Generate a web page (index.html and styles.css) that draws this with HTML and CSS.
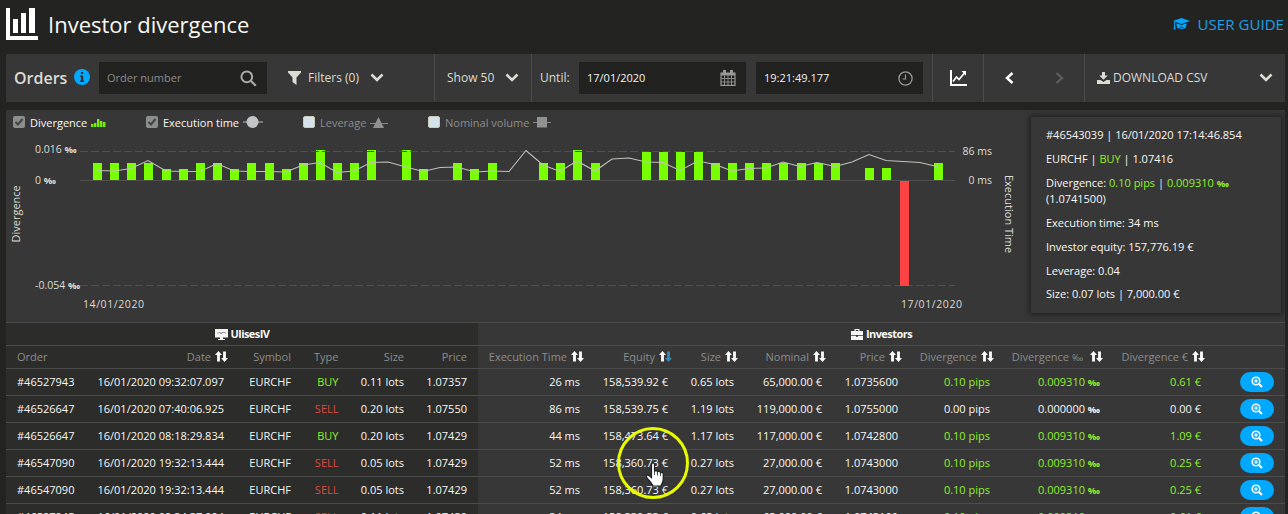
FILE: index.html
```
<!DOCTYPE html>
<html lang="en">
<head>
<meta charset="utf-8">
<title>Investor divergence</title>
<link rel="stylesheet" href="styles.css">
</head>
<body>
<svg class="defs" aria-hidden="true">
  <symbol id="chevron" viewBox="0 0 14 9"><path d="M1.500 1.500 7 7l5.500-5.500" fill="none" stroke="currentColor" stroke-width="2.600"/></symbol>
  <symbol id="sort" viewBox="0 0 13 11"><path d="M3.500 0 7 4H4.900v6.500H2.100V4H0z" fill="currentColor"/><path d="M9.500 11 6 7h2.100V.5h2.800V7H13z" fill="currentColor"/></symbol>
  <symbol id="plus-lens" viewBox="0 0 12 12"><circle cx="5" cy="5" r="3.800" fill="none" stroke="#fff" stroke-width="1.600"/><path d="M8 8l3 3" stroke="#fff" stroke-width="2.200"/><path d="M5 3v4M3 5h4" stroke="#fff" stroke-width="1.200"/></symbol>
</svg>
<header class="top">
  <svg class="logo" width="32" height="32" viewBox="0 0 32 32"><path d="M0 0h4v28h28v4H0zM7 11h5v14H7zM15 5h5v20h-5zM23 0h6v25h-6z" fill="#fff"/></svg>
  <h1>Investor divergence</h1>
  <a class="guide"><svg width="17" height="12" viewBox="0 0 17 12"><path d="M8.500 0 17 3 8.500 6 0 3z"/><path d="M3.500 5.200 8.500 7l5-1.800V8L11 9.500 8.500 8.500 6 9.500 3.500 8zM1 3.500h1V8l.8 3.500H.5L1 8z"/><path d="M4 8.500 8.500 10 13 8.500V10l-4.500 1L4 10z"/></svg><span>USER GUIDE</span></a>
</header>
<section class="toolbar">
  <div class="cell orders">
    <h2>Orders</h2>
    <svg class="info" width="16" height="16" viewBox="0 0 16 16"><circle cx="8" cy="8" r="8" fill="#00a8ff"/><path d="M6.900 3h2.200v2H6.900zM6 6.500h3.200v5H10V13H6v-1.500h1V8H6z" fill="#333"/></svg>
    <div class="field search"><span>Order number</span><svg width="17" height="17" viewBox="0 0 17 17"><circle cx="6.800" cy="6.800" r="5.400" fill="none" stroke="#aaa" stroke-width="2"/><path d="m10.800 10.800 5 5" stroke="#aaa" stroke-width="2.200"/></svg></div>
    <svg class="funnel" width="13" height="14" viewBox="0 0 13 14"><path d="M0 0h13v1.500L8.500 6.500V14l-4-3V6.500L0 1.500z" fill="#dcdcd4"/></svg>
    <span class="filters">Filters (0)</span>
    <svg class="chev" width="14" height="9"><use href="#chevron"/></svg>
  </div>
  <div class="cell show"><span>Show 50</span><svg class="chev" width="14" height="9"><use href="#chevron"/></svg></div>
  <div class="cell until"><span>Until:</span>
    <div class="field date"><span>17/01/2020</span><svg width="16" height="16" viewBox="0 0 16 16"><path d="M1 3h14v12.300H1z" fill="none" stroke="#999" stroke-width="1.200"/><path d="M1 3h14v2.500H1zM3 0h3v4H3zM10 0h3v4h-3z" fill="#999"/><path d="M1 8.500h14M1 12h14M4.500 5v10M8 5v10M11.500 5v10" stroke="#888"/></svg></div>
    <div class="field time"><span>19:21:49.177</span><svg width="15" height="15" viewBox="0 0 15 15"><circle cx="7.500" cy="7.500" r="6.600" fill="none" stroke="#999" stroke-width="1.300"/><path d="M7.500 3.500v4.500H4.500" fill="none" stroke="#999" stroke-width="1.200"/></svg></div>
  </div>
  <div class="cell graph"><svg width="17" height="16" viewBox="0 0 17 16"><path d="M1 0v15h16" fill="none" stroke="#fff" stroke-width="2"/><path d="M3 11.500 6.500 7l2.500 2.500 5.500-6.500" fill="none" stroke="#fff" stroke-width="1.700"/><path d="M11.500 1H16v4.800z" fill="#fff"/></svg></div>
  <div class="cell pager"><svg width="9" height="12" viewBox="0 0 9 12"><path d="M7.500 1 2 6l5.500 5" fill="none" stroke="#fff" stroke-width="2.500"/></svg><svg width="9" height="12" viewBox="0 0 9 12"><path d="M1.500 1 7 6l-5.500 5" fill="none" stroke="#5e5e5e" stroke-width="2.300"/></svg></div>
  <div class="cell download"><svg width="13" height="12" viewBox="0 0 13 12"><path d="M5 0h3v3.500h2.700L6.500 7.700 2.300 3.500H5zM0 8h3.500l3 2 3-2H13v4H0z" fill="#dcdcd4"/></svg><span>DOWNLOAD CSV</span><svg class="chev" width="14" height="9"><use href="#chevron"/></svg></div>
</section>
<section class="panel">
  <div class="plot">
    <div class="legend">
      <div class="key on k1"><i class="box"><svg width="12" height="12" viewBox="0 0 12 12"><path d="m2.500 6 2.500 2.500 4.500-5.500" fill="none" stroke="#444" stroke-width="2"/></svg></i><span>Divergence</span><svg width="15" height="9" viewBox="0 0 15 9"><path d="M0 6h2.400v3H0zM3 5h2.400v4H3zM6 1h2.400v8H6zM9 3h2.400v6H9zM12 4h2.400v5H12z" fill="#76f000"/></svg></div>
      <div class="key on k2"><i class="box"><svg width="12" height="12" viewBox="0 0 12 12"><path d="m2.500 6 2.500 2.500 4.500-5.500" fill="none" stroke="#444" stroke-width="2"/></svg></i><span>Execution time</span><svg width="20" height="12" viewBox="0 0 20 12"><path d="M0 6h20" stroke="#bbb"/><circle cx="9.500" cy="6" r="6" fill="#c2c6c6"/></svg></div>
      <div class="key k3"><i class="box"></i><span>Leverage</span><svg width="18" height="12" viewBox="0 0 18 12"><path d="M0 7.500h18" stroke="#888"/><path d="M8.500 1 14 12H3z" fill="#919191"/></svg></div>
      <div class="key k4"><i class="box"></i><span>Nominal volume</span><svg width="18" height="11" viewBox="0 0 18 11"><path d="M0 5.500h18" stroke="#888"/><path d="M4 0h10v10.500H4z" fill="#919191"/></svg></div>
    </div>
    <svg class="chart" width="1014" height="182" viewBox="6 140 1014 182">
      <path d="M93 163h9v17h-9zM110 163h9v17h-9zM127 163h9v17h-9zM144 163h9v17h-9zM162 169h9v11h-9zM179 169h9v11h-9zM196 163h9v17h-9zM213 163h9v17h-9zM230 169h9v11h-9zM247 163h9v17h-9zM265 163h9v17h-9zM282 169h9v11h-9zM299 163h9v17h-9zM316 150h9v30h-9zM333 163h9v17h-9zM350 163h9v17h-9zM367 150h9v30h-9zM402 150h9v30h-9zM419 169h9v11h-9zM453 163h9v17h-9zM470 169h9v11h-9zM488 163h9v17h-9zM539 163h9v17h-9zM556 163h9v17h-9zM573 150h9v30h-9zM591 163h9v17h-9zM642 152h9v28h-9zM659 152h9v28h-9zM676 152h9v28h-9zM694 152h9v28h-9zM711 163h9v17h-9zM728 163h9v17h-9zM745 163h9v17h-9zM762 163h9v17h-9zM779 163h9v17h-9zM797 163h9v17h-9zM814 163h9v17h-9zM831 163h9v17h-9zM865 168h9v12h-9zM882 168h9v12h-9zM934 163h9v17h-9z" fill="#78ff00"/>
      <path class="grid dash" d="M80 151.500h875M80 285.500h875"/>
      <path class="grid" d="M80 180.500h875"/>
      <path d="M900 181h9v105h-9z" fill="#fd4343"/>
      <polyline class="line" points="97.500,170.500 114,171 131,168.500 148,160.500 166,171 183,171.500 200,171.500 217,163.500 234,171 251,171.500 269,171.500 286,172 303,165 320,162.500 337,172.500 354,171 371,162.500 388,162 406,167 423,171.500 440,167.500 457,167 475,172 492,171 509,171.500 526,150.500 543,165 560,171.500 577,161 595,171 612,159 629,158 646,162 663,162.500 680,170.500 698,161 715,164.500 732,171 749,168.500 766,168 783,162 800,166.500 817,162.500 835,166.500 852,162 869,154.500 886,160.500 903,161.500 920,162.500 937,166.500"/>
      <text x="35" y="153">0.016 <tspan class="pm">‰</tspan></text><text x="35" y="184">0 <tspan class="pm">‰</tspan></text><text x="35" y="289">-0.054 <tspan class="pm">‰</tspan></text>
      <text x="992" y="155" text-anchor="end">86 ms</text><text x="992" y="184" text-anchor="end">0 ms</text>
      <text class="day" x="83" y="308" textLength="61">14/01/2020</text><text class="day" x="901" y="308" textLength="61">17/01/2020</text>
      <text class="axis" transform="translate(20 242.500) rotate(-90)">Divergence</text>
      <text class="axis" transform="translate(1005 175) rotate(90)">Execution Time</text>
    </svg>
  </div>
  <aside class="detail">
    <p>#46543039 | 16/01/2020 17:14:46.854</p>
    <p>EURCHF | <b>BUY</b> | 1.07416</p>
    <p>Divergence: <b>0.10 pips</b> | <b>0.009310 <i class="pm">‰</i></b><br>(1.0741500)</p>
    <p>Execution time: 34 ms</p>
    <p>Investor equity: 157,776.19 €</p>
    <p class="last">Leverage: 0.04</p>
    <p>Size: 0.07 lots | 7,000.00 €</p>
  </aside>
</section>
<section class="table">
  <div class="groups">
    <div class="group"><svg width="13" height="11" viewBox="0 0 13 11"><path d="M0 0h13v8.500H8V10h2v1H3v-1h2V8.500H0z" fill="#f4f4f4"/><path d="M2 4h2l1-1 1 2 1-2 1 1 1-1 1 1h1" stroke="#889" fill="none" stroke-width=".8"/></svg><span>UlisesIV</span></div>
    <div class="group inv"><svg width="12" height="11" viewBox="0 0 12 11"><path d="M3.500 2V0h5v2H12v4H0V2zm1.200 0h2.600V1H4.700zM0 6.800h5v1h2v-1h5V11H0z" fill="#f4f4f4"/></svg><span>Investors</span></div>
  </div>
  <div class="row head">
    <div>Order</div><div class="s">Date<svg><use href="#sort"/></svg></div><div>Symbol</div><div>Type</div><div>Size</div><div>Price</div>
    <div class="s">Execution Time<svg><use href="#sort"/></svg></div><div class="s">Equity<svg class="active" viewBox="0 0 13 11"><path d="M3.500 0 7 4H4.900v6.500H2.100V4H0z"/><path class="down" d="M9.500 11 6 7h2.100V.5h2.800V7H13z"/></svg></div><div class="s">Size<svg><use href="#sort"/></svg></div><div class="s">Nominal<svg><use href="#sort"/></svg></div><div class="s">Price<svg><use href="#sort"/></svg></div><div class="s">Divergence<svg><use href="#sort"/></svg></div><div class="s"><span>Divergence <i class="pm thin">‰</i></span><svg class="wide"><use href="#sort"/></svg></div><div class="s">Divergence €<svg><use href="#sort"/></svg></div><div></div>
  </div>
  <div class="row"><div>#46527943</div><div>16/01/2020 09:32:07.097</div><div>EURCHF</div><div class="buy">BUY</div><div>0.11 lots</div><div>1.07357</div><div>26 ms</div><div>158,539.92 €</div><div>0.65 lots</div><div>65,000.00 €</div><div>1.0735600</div><div class="pos">0.10 pips</div><div class="pos"><span>0.009310 <i class="pm">‰</i></span></div><div class="pos">0.61 €</div><div class="act"><button><svg width="12" height="12"><use href="#plus-lens"/></svg></button></div></div>
  <div class="row"><div>#46526647</div><div>16/01/2020 07:40:06.925</div><div>EURCHF</div><div class="sell">SELL</div><div>0.20 lots</div><div>1.07550</div><div>86 ms</div><div>158,539.75 €</div><div>1.19 lots</div><div>119,000.00 €</div><div>1.0755000</div><div>0.00 pips</div><div><span>0.000000 <i class="pm">‰</i></span></div><div>0.00 €</div><div class="act"><button><svg width="12" height="12"><use href="#plus-lens"/></svg></button></div></div>
  <div class="row"><div>#46526647</div><div>16/01/2020 08:18:29.834</div><div>EURCHF</div><div class="buy">BUY</div><div>0.20 lots</div><div>1.07429</div><div>44 ms</div><div>158,473.64 €</div><div>1.17 lots</div><div>117,000.00 €</div><div>1.0742800</div><div class="pos">0.10 pips</div><div class="pos"><span>0.009310 <i class="pm">‰</i></span></div><div class="pos">1.09 €</div><div class="act"><button><svg width="12" height="12"><use href="#plus-lens"/></svg></button></div></div>
  <div class="row"><div>#46547090</div><div>16/01/2020 19:32:13.444</div><div>EURCHF</div><div class="sell">SELL</div><div>0.05 lots</div><div>1.07429</div><div>52 ms</div><div>158,360.73 €</div><div>0.27 lots</div><div>27,000.00 €</div><div>1.0743000</div><div class="pos">0.10 pips</div><div class="pos"><span>0.009310 <i class="pm">‰</i></span></div><div class="pos">0.25 €</div><div class="act"><button><svg width="12" height="12"><use href="#plus-lens"/></svg></button></div></div>
  <div class="row"><div>#46547090</div><div>16/01/2020 19:32:13.444</div><div>EURCHF</div><div class="sell">SELL</div><div>0.05 lots</div><div>1.07429</div><div>52 ms</div><div>158,360.73 €</div><div>0.27 lots</div><div>27,000.00 €</div><div>1.0743000</div><div class="pos">0.10 pips</div><div class="pos"><span>0.009310 <i class="pm">‰</i></span></div><div class="pos">0.25 €</div><div class="act"><button><svg width="12" height="12"><use href="#plus-lens"/></svg></button></div></div>
  <div class="row"><div>#46527945</div><div>16/01/2020 09:34:37.094</div><div>EURCHF</div><div class="sell">SELL</div><div>0.11 lots</div><div>1.07430</div><div>34 ms</div><div>158,330.53 €</div><div>0.65 lots</div><div>65,000.00 €</div><div>1.0743100</div><div class="pos">0.10 pips</div><div class="pos"><span>0.009310 <i class="pm">‰</i></span></div><div class="pos">0.61 €</div><div class="act"><button><svg width="12" height="12"><use href="#plus-lens"/></svg></button></div></div>
</section>
<svg class="pointer" width="74" height="74" viewBox="0 0 74 74"><circle cx="37" cy="37" r="34.500" fill="none" stroke="#e8fb00" stroke-width="3"/><path d="M35.500 38.500c0-2 3-2 3 0v7c.5-1.300 3-1 3 .5.800-1 3-.7 3 .8.800-.8 2.700-.4 2.700 1.200V53c0 4-1.700 4.500-2.200 7h-8c-1-3-4.500-6-6.500-9-.8-2 1.500-2.500 2.800-1.300l2.200 2z" fill="#fff" stroke="#1b2026" stroke-width="1.200"/><path d="M41.500 46.500v3M44.500 47v3M38.500 45v4" stroke="#1b2026" stroke-width=".8"/></svg>
</body>
</html>
```
FILE: styles.css
```
* { box-sizing: border-box; }
body { margin: 0; width: 1288px; height: 514px; overflow: hidden; background: #232321; color: #f8f8f5; font: 11px/16px "Open Sans", sans-serif; padding: 0 3px 0 6px; position: relative; }
.defs { display: none; }
svg { display: block; flex: none; }
h1, h2, p { margin: 0; font-weight: 400; }
.top { height: 54px; display: flex; align-items: flex-start; padding-top: 8px; }
h1 { font-size: 22px; line-height: 32px; margin: 0 0 0 10px; }
.guide { margin: 7px 1px 0 auto; color: #1ba1e8; display: flex; align-items: center; font-size: 15px; letter-spacing: .05px; gap: 8px; line-height: 18px; }
.guide svg { fill: #00a8ff; margin-top: -1px; }
.toolbar { height: 48px; background: #373737; display: flex; margin-bottom: 8px; color: #dcdcd4; font-size: 12px; }
.cell { display: flex; align-items: center; border-left: 1px solid #4c4c4c; height: 48px; white-space: nowrap; }
.orders { width: 428px; border-left: 0; padding-left: 8px; }
h2 { font-size: 16px; font-weight: 600; width: 60px; }
.info { margin-top: -2px; }
.field { height: 32px; background: #212120; display: flex; align-items: center; justify-content: space-between; font-size: 11px; padding: 0 10px 0 8px; color: #f2f2ee; }
.search { width: 168px; margin-left: 9px; color: #8c8c8c; }
.funnel { margin-left: 21px; }
.filters { width: 62px; margin-left: 7px; }
.chev { margin-top: -1px; }
.show { width: 97px; padding-left: 12px; }
.show .chev { margin-left: auto; margin-right: 12px; }
.until { width: 401px; padding-left: 8px; }
.until > span { width: 39px; }
.date { width: 167px; }
.time { width: 167px; margin-left: 10px; }
.graph { width: 51px; justify-content: center; }
.pager { width: 101px; padding-left: 21px; gap: 41px; }
.pager svg { margin-top: -1px; }
.download { flex: 1; padding: 0 12px; }
.download span { margin: 0 auto 0 3px; }
.panel { height: 212px; background: #373737; display: flex; position: relative; z-index: 1; }
.plot { width: 1014px; }
.legend { height: 30px; display: flex; padding: 4px 0 0 7px; }
.key { display: flex; align-items: center; height: 16px; margin-top: 1px; color: #8c8c8c; white-space: nowrap; }
.key.on { color: #f8f8f5; }
.key > svg { margin: -2px 0 0 4px; }
.box { width: 12px; height: 12px; background: #d5e3ea; border: 1px solid #cfc9b8; border-radius: 2px; margin: -2px 5px 0 0; }
.on .box { background: #8b8e8c; border: 0; }
.k1 { width: 133px; }
.k2 { width: 157px; }
.k3 { width: 125px; }
.chart text { fill: #dcdcd4; font-size: 10.500px; }
.chart .axis { font-size: 11px; }
.pm, .chart text .pm { font-size: 9.500px; font-weight: 700; font-style: normal; line-height: 0; letter-spacing: -1px; }
.pm.thin { font-weight: 400; letter-spacing: 0; }
.grid { stroke: #505050; stroke-width: 1; fill: none; }
.dash { stroke-dasharray: 8 3; }
.line { fill: none; stroke: #bfc2b8; stroke-width: 1.100; }
.detail { width: 250px; height: 196px; margin: 7px 0 0 11px; padding: 10px 15px; background: #373737; box-shadow: 0 0 5px 2px #242424; }
.detail p { margin-bottom: 8px; }
.detail .last { margin-bottom: 7px; }
.detail b { font-weight: 400; color: #8ef02c; }
.groups { display: flex; height: 23px; font-weight: 700; letter-spacing: -.55px; }
.group { width: 472px; display: flex; justify-content: center; align-items: center; gap: 3px; background: #2c2c2a; border-top: 1px solid #4c4c4c; }
.inv { flex: 1; background: #373737; }
.row { display: grid; grid-template-columns: 74px 155px 67px 47.500px 65.500px 63px 113px 88px 66px 88px 76px 92px 109px 102px 73px; height: 27px; border-top: 1px solid #4c4c4c; background: linear-gradient(to right, #2c2c2a 472px, #373737 472px); }
.row > div { display: flex; align-items: center; justify-content: flex-end; padding-right: 11px; white-space: nowrap; }
.row > div:first-child { justify-content: flex-start; padding: 0 0 0 11px; }
.head { height: 23px; color: #8c8c8c; }
.row > .s { padding-right: 7px; }
.s svg { width: 13px; height: 11px; margin: -1px 0 0 4px; color: #fff; fill: #fff; }
.s svg.wide { margin-left: 7px; }
.active .down { fill: #3789b5; }
.row > .pos, .buy { color: #8ef02c; }
.sell { color: #d94b43; }
button { width: 34px; height: 20px; border: 0; padding: 0; border-radius: 10px; background: #00a8ff; display: flex; align-items: center; justify-content: center; }
.pointer { position: absolute; left: 616px; top: 426px; z-index: 2; }
```
